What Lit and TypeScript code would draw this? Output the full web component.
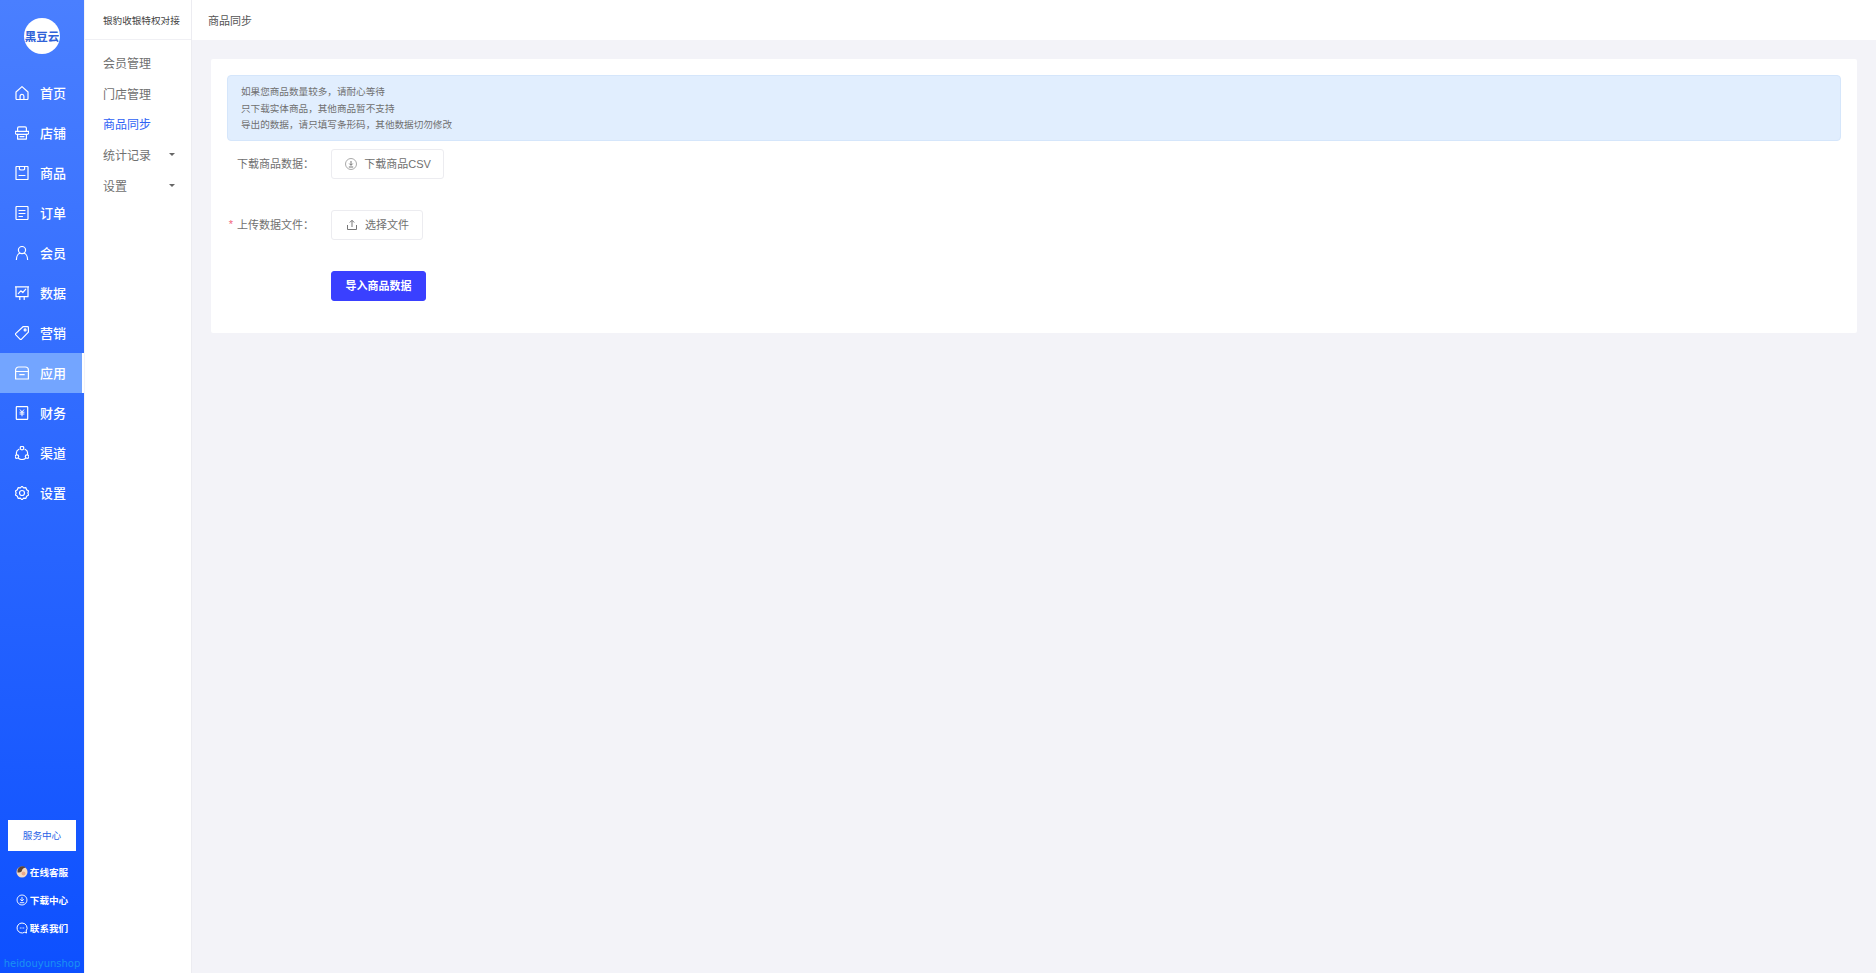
import { LitElement, html, css, svg } from "lit";
import { customElement } from "lit/decorators.js";

const icons: Record<string, unknown> = {
  home: svg`<path d="M2 7 8 1.600 14 7v6.600a.9.9 0 0 1-.9.900H2.900a.9.9 0 0 1-.9-.9z"/><path d="M6.100 14.500v-3.300a1.900 1.900 0 0 1 3.800 0v3.300"/>`,
  shop: svg`<path d="M3.600 6.400V3.200c0-.8.500-1.300 1.300-1.300h6.200c.8 0 1.300.5 1.300 1.300v3.200"/><path d="M1.300 6.400h13.400v1.400c0 1-.7 1.500-1.500 1.500H2.800c-.8 0-1.500-.5-1.500-1.500z"/><path d="M3.600 9.300v4.800h8.800V9.300"/><path d="M6 11.600h4"/>`,
  goods: svg`<rect x="2" y="1.500" width="12" height="13" rx=".6"/><path d="M5.400 1.500v2.600c0 1.200 5.200 1.200 5.200 0V1.500M5 10.500h6"/>`,
  order: svg`<rect x="2" y="1.500" width="12" height="13" rx=".8"/><path d="M5 5.500h6M5 8.500h6M5 11.500h3.500"/>`,
  user: svg`<circle cx="8" cy="5.100" r="3.600"/><path d="M2.400 14.800c0-3.600 2-6.100 3.300-6.600M13.600 14.800c0-3.600-2-6.100-3.300-6.600"/>`,
  chart: svg`<path d="M1.200 1.800h13.600M2 1.800v9.900h12V1.800M5.800 11.700v3M10.200 11.700v3"/><path d="m4.300 8.600 2.500-2.800 2 1.700 3-3.400"/>`,
  tag: svg`<path d="M9 1.700h4.700c.4 0 .7.300.7.700v4.700L7.300 14.300a.8.800 0 0 1-1.100 0L1.600 9.700a.8.800 0 0 1 0-1.100z"/><circle cx="11.100" cy="4.900" r="1"/>`,
  app: svg`<path d="M1.600 5C1.600 3.200 2.900 2 4.700 2h6.600c1.800 0 3.100 1.200 3.100 3v9H1.600z"/><path d="M1.600 6.500h12.800M5.800 9.700h4.400"/>`,
  fin: svg`<rect x="2.300" y="1.700" width="11.400" height="12.600" rx=".6"/><path d="m6.200 4.800 1.800 2.100 1.800-2.100M6 7.200h4M6 9h4M8 6.900v4" stroke-width="1"/>`,
  channel: svg`<path d="M5 4.300a4.400 4.400 0 0 0-2.400 5.200M11 4.300a4.400 4.400 0 0 1 2.400 5.200M4.700 13.400a6 6 0 0 0 6.600 0"/><circle cx="8" cy="3.100" r="1.800"/><circle cx="2.900" cy="11.600" r="1.800"/><circle cx="13.100" cy="11.600" r="1.800"/>`,
  gear: svg`<path d="m8 1.200 1.600 1.600 2.300-.2.700 2.100 2 1.200-.7 2.100.7 2.100-2 1.200-.7 2.100-2.300-.2L8 14.800l-1.600-1.600-2.300.2-.7-2.100-2-1.200.7-2.100-.7-2.100 2-1.200.7-2.100 2.300.2z"/><circle cx="8" cy="8" r="2.500"/>`,
};

const nav = [
  ["home", "首页"], ["shop", "店铺"], ["goods", "商品"], ["order", "订单"], ["user", "会员"], ["chart", "数据"],
  ["tag", "营销"], ["app", "应用"], ["fin", "财务"], ["channel", "渠道"], ["gear", "设置"],
];

const sub: [string, boolean, boolean][] = [
  ["会员管理", false, false], ["门店管理", false, false], ["商品同步", true, false],
  ["统计记录", false, true], ["设置", false, true],
];

@customElement("app-root")
export class AppRoot extends LitElement {
  static styles = css`
    :host {
      display: flex;
      width: 100%;
      height: 973px;
      overflow: hidden;
      background: #f3f3f8;
      font-family: "Liberation Sans", "Noto Sans CJK SC", sans-serif;
      color: #666;
    }
    .side {
      width: 84px;
      flex: none;
      display: flex;
      flex-direction: column;
      background: linear-gradient(180deg, #4a7fff 0%, #0d50ff 100%);
      color: #fff;
    }
    .logo {
      width: 36px;
      height: 36px;
      margin: 18px auto 19px;
      border-radius: 50%;
      background: #fff;
      color: #2f62d8;
      font-size: 11.500px;
      font-weight: 700;
      display: flex;
      align-items: center;
      justify-content: center;
      white-space: nowrap;
    }
    .nav {
      height: 40px;
      display: flex;
      align-items: center;
      gap: 11px;
      padding-left: 15px;
      font-size: 13px;
      font-weight: 500;
      box-sizing: border-box;
    }
    .nav span {
      padding-bottom: 2px;
    }
    .nav svg {
      width: 14px;
      height: 14px;
      fill: none;
      stroke: #fff;
      stroke-width: 1.200;
      stroke-linejoin: round;
      stroke-linecap: round;
      flex: none;
    }
    .nav.active {
      background: #73a5ff;
      border-right: 2px solid #fff;
    }
    .bottom {
      margin-top: auto;
      display: flex;
      flex-direction: column;
    }
    .service {
      width: 68px;
      height: 31px;
      box-sizing: border-box;
      padding-bottom: 2px;
      margin: 0 auto 7px;
      background: #fff;
      color: #2a63e6;
      font-size: 9.600px;
      display: flex;
      align-items: center;
      justify-content: center;
    }
    .link {
      height: 28px;
      display: flex;
      align-items: center;
      justify-content: center;
      gap: 2px;
      font-size: 9.600px;
      font-weight: 700;
    }
    .link svg {
      width: 12px;
      height: 12px;
      flex: none;
    }
    .brand {
      height: 31px;
      box-sizing: border-box;
      padding-top: 15px;
      font-family: "DejaVu Sans", sans-serif;
      font-size: 10px;
      line-height: 14px;
      color: #1a92f2;
      text-align: center;
      white-space: nowrap;
    }
    .subnav {
      width: 108px;
      flex: none;
      background: #fff;
      border-right: 1px solid #ececf1;
      border-left: 1px solid #f3f3f8;
      box-sizing: border-box;
    }
    .subhead {
      height: 40px;
      box-sizing: border-box;
      border-bottom: 1px solid #f0f0f4;
      padding-left: 18px;
      display: flex;
      align-items: center;
      font-size: 9.600px;
      color: #444;
      white-space: nowrap;
    }
    .sublist {
      padding-top: 7px;
      display: flex;
      flex-direction: column;
    }
    .subitem {
      height: 30.700px;
      padding: 0 16px 0 18px;
      display: flex;
      align-items: center;
      justify-content: space-between;
      font-size: 12px;
      color: #707070;
    }
    .subitem.on {
      color: #2e62f5;
    }
    .caret {
      width: 0;
      height: 0;
      border-left: 3px solid transparent;
      border-right: 3px solid transparent;
      border-top: 3px solid #666;
    }
    .main {
      flex: 1;
      min-width: 0;
      display: flex;
      flex-direction: column;
    }
    .top {
      height: 40px;
      flex: none;
      box-sizing: border-box;
      background: #fff;
      padding: 0 0 1px 16px;
      display: flex;
      align-items: center;
      font-size: 11px;
      color: #555;
    }
    .content {
      padding: 19px 19px 0 19px;
    }
    .card {
      background: #fff;
      border-radius: 2px;
      padding: 16px 16px 32px;
    }
    .alert {
      height: 66px;
      box-sizing: border-box;
      background: #e1eefe;
      border: 1px solid #d5e6fb;
      border-radius: 4px;
      padding: 8px 12px 8px 13px;
      font-size: 9.600px;
      line-height: 16.500px;
      color: #707070;
    }
    .row {
      display: grid;
      grid-template-columns: 104px auto;
      justify-content: start;
      align-items: center;
      margin-top: 31px;
    }
    .row.first {
      margin-top: 8px;
    }
    .label {
      display: flex;
      align-items: center;
      justify-content: flex-end;
      padding: 0 17px 2px 0;
      font-size: 11px;
      color: #707070;
      white-space: nowrap;
    }
    .req {
      color: #f2637b;
      margin-right: 4px;
      font-size: 11px;
    }
    .btn {
      height: 30px;
      box-sizing: border-box;
      border: 1px solid #ececf0;
      border-radius: 3px;
      background: #fff;
      font-size: 11px;
      color: #707070;
      display: flex;
      align-items: center;
      justify-content: center;
      gap: 6px;
      white-space: nowrap;
    }
    .btn span {
      padding-bottom: 2px;
    }
    .btn svg {
      width: 14px;
      height: 14px;
      fill: none;
      stroke: #777;
      stroke-width: 1;
      flex: none;
    }
    .b1 { width: 113px; }
    .b2 { width: 92px; }
    .b3 {
      width: 95px;
      background: #3a40ff;
      border-color: #3a40ff;
      color: #fff;
      font-weight: 700;
    }
  `;

  render() {
    return html`
      <aside class="side">
        <div class="logo">黑豆云</div>
        ${nav.map(
          ([ic, t]) => html`<div class="nav ${t === "应用" ? "active" : ""}">
            <svg viewBox="1 1 14 14">${icons[ic]}</svg><span>${t}</span>
          </div>`
        )}
        <div class="bottom">
          <div class="service">服务中心</div>
          <div class="link">
            <svg viewBox="0 0 12 12">
              <circle cx="6" cy="6" r="5.500" fill="#f4d9c4" />
              <path d="M1.500 4a5 5 0 0 1 8-2.500c-2 .5-3 1-3.500 3S3.500 6.500 1.500 6.500z" fill="#5a4336" />
              <circle cx="7.500" cy="7.500" r="2" fill="#e9a98c" />
            </svg>
            <span>在线客服</span>
          </div>
          <div class="link">
            <svg viewBox="0 0 12 12" fill="none" stroke="#fff" stroke-width=".9">
              <circle cx="6" cy="6" r="5" />
              <path d="M6 3v3.800M4.200 5.300 6 7l1.800-1.700M3.800 8.700h4.400" />
            </svg>
            <span>下载中心</span>
          </div>
          <div class="link">
            <svg viewBox="0 0 12 12" fill="none" stroke="#fff" stroke-width="1">
              <path d="M6 1a5 5 0 1 0 2.600 9.300l2 .7-.5-2A5 5 0 0 0 6 1z" />
              <path d="M3.800 6h4.400" stroke-dasharray="1 .7" />
            </svg>
            <span>联系我们</span>
          </div>
          <div class="brand">heidouyunshop</div>
        </div>
      </aside>
      <nav class="subnav">
        <div class="subhead">银豹收银特权对接</div>
        <div class="sublist">
          ${sub.map(
            ([t, on, caret]) => html`<div class="subitem ${on ? "on" : ""}">
              <span>${t}</span>${caret ? html`<i class="caret"></i>` : ""}
            </div>`
          )}
        </div>
      </nav>
      <main class="main">
        <header class="top">商品同步</header>
        <div class="content">
          <section class="card">
            <div class="alert">
              如果您商品数量较多，请耐心等待<br />只下载实体商品，其他商品暂不支持<br />导出的数据，请只填写条形码，其他数据切勿修改
            </div>
            <div class="row first">
              <div class="label">下载商品数据：</div>
              <div class="btn b1">
                <svg viewBox="0 0 14 14">
                  <circle cx="7" cy="7" r="5.500" stroke="#aaa" />
                  <path d="M7 4v4.200M5.300 6.600 7 8.300l1.700-1.700M4.800 10h4.400" />
                </svg>
                <span>下载商品CSV</span>
              </div>
            </div>
            <div class="row">
              <div class="label"><span class="req">*</span>上传数据文件：</div>
              <div class="btn b2">
                <svg viewBox="0 0 14 14" stroke-width="1.200">
                  <path d="M7 9V2.500M4.800 4.500 7 2.300l2.200 2.200M2.500 7v4.500h9V7" />
                </svg>
                <span>选择文件</span>
              </div>
            </div>
            <div class="row">
              <div></div>
              <div class="btn b3"><span>导入商品数据</span></div>
            </div>
          </section>
        </div>
      </main>
    `;
  }
}
